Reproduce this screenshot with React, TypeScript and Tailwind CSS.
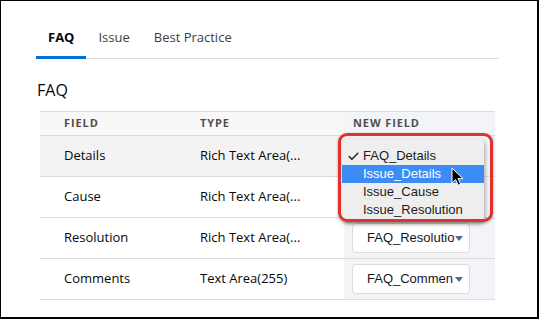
import { Check } from 'lucide-react';

type Row = {
  field: string;
  type: string;
  value: string;
  active?: boolean;
  covered?: boolean;
};

const rows: Row[] = [
  { field: 'Details', type: 'Rich Text Area(...', value: 'FAQ_Details', active: true, covered: true },
  { field: 'Cause', type: 'Rich Text Area(...', value: 'FAQ_Cause', covered: true },
  { field: 'Resolution', type: 'Rich Text Area(...', value: 'FAQ_Resolutio' },
  { field: 'Comments', type: 'Text Area(255)', value: 'FAQ_Commen' },
];

const tabs = ['FAQ', 'Issue', 'Best Practice'];

const menuItems = ['FAQ_Details', 'Issue_Details', 'Issue_Cause', 'Issue_Resolution'];

function Caret() {
  return (
    <svg width="8" height="5" viewBox="0 0 8 5" className="shrink-0">
      <path d="M0 0h8L4 5z" fill="#54698d" />
    </svg>
  );
}

// the menu sits on top of the first two selects, so their labels are not drawn
function FakeSelect({ value, focused, covered }: { value: string; focused?: boolean; covered?: boolean }) {
  return (
    <div
      className={`ml-[8px] flex h-[30px] w-[118px] items-center rounded-[4px] border bg-white pl-[14px] pr-[6px] text-[13px] text-[#16181d] font-['Liberation_Sans',Arial,sans-serif] ${
        focused ? 'border-[#1589ee]' : 'border-[#dddbda]'
      }`}
    >
      <span className="w-[88px] overflow-hidden whitespace-nowrap">{covered ? '' : value}</span>
      <Caret />
    </div>
  );
}

function Cursor() {
  return (
    <svg width="13" height="19" viewBox="0 0 13 19" className="absolute left-[107px] top-[31px] z-30">
      <path
        d="M1 1v15l3.6-3.4 2.6 5.6 2.4-1.1-2.6-5.4H12z"
        fill="#000"
        stroke="#fff"
        strokeWidth="1"
        strokeLinejoin="round"
      />
    </svg>
  );
}

function OpenMenu() {
  return (
    <>
      <div className="absolute left-[-2px] top-[3px] z-10 w-[142px] rounded-[5px] bg-[#eeeeee] pt-[8px] pb-[3px] shadow-[1px_2px_4px_rgba(0,0,0,0.35)] font-['Liberation_Sans',Arial,sans-serif] text-[13px]">
        {menuItems.map((item, i) => (
          <div
            key={item}
            className={`flex h-[18px] items-center ${
              i === 1 ? 'bg-[#3b8cf5] text-white' : 'text-[#1b1b1b]'
            }`}
          >
            <span className="flex w-[21px] justify-center pl-[1px]">
              {i === 0 && <Check className="h-[13px] w-[13px]" strokeWidth={2.6} />}
            </span>
            {item}
          </div>
        ))}
      </div>
      <div className="absolute left-[-6px] top-[-3px] z-20 h-[89px] w-[155px] rounded-[9px] border-[3px] border-[#e2312b] shadow-[0_1px_3px_rgba(0,0,0,0.3)]" />
      <Cursor />
    </>
  );
}

export default function App() {
  return (
    <div className="h-[319px] w-[539px] overflow-hidden border-t border-l border-r-2 border-b-2 border-black bg-white font-['Open_Sans',sans-serif]">
      <div className="ml-[35px] mt-[19px] flex w-[463px] shadow-[inset_0_-1px_0_#dddbda]">
        {tabs.map((tab, i) => (
          <div
            key={tab}
            className={`flex h-[39px] items-center border-b-[3px] px-[12px] text-[13px] ${
              i === 0
                ? 'border-[#0070d2] font-bold text-[#080707]'
                : 'border-transparent text-[#3e3e3c]'
            }`}
          >
            {tab}
          </div>
        ))}
      </div>

      <h2 className="ml-[36px] mt-[21px] text-[16px] leading-[20px] text-[#080707]">FAQ</h2>

      <div className="ml-[39px] mt-[11px] w-[455px] text-[13px] text-[#080707]">
        <div className="grid h-[25px] grid-cols-[136px_168px_151px] border-y border-[#dddbda] bg-[#f8f8f8] text-[11px] font-bold tracking-[0.9px] text-[#514f4d]">
          <div className="flex items-center pl-[24px]">FIELD</div>
          <div className="flex items-center pl-[24px]">TYPE</div>
          <div className="flex items-center bg-[#f3f4f7] pl-[9px]">NEW FIELD</div>
        </div>
        {rows.map((row) => (
          <div
            key={row.field}
            className={`grid h-[41px] grid-cols-[136px_168px_151px] border-b border-[#dddbda] ${
              row.active ? 'bg-[#f3f3f3]' : 'bg-white'
            }`}
          >
            <div className="flex items-center pl-[24px]">{row.field}</div>
            <div className="flex items-center whitespace-nowrap pl-[24px]">{row.type}</div>
            <div className="relative flex items-center bg-[#f3f4f7]">
              <FakeSelect value={row.value} focused={row.active} covered={row.covered} />
              {row.active && <OpenMenu />}
            </div>
          </div>
        ))}
      </div>
    </div>
  );
}
